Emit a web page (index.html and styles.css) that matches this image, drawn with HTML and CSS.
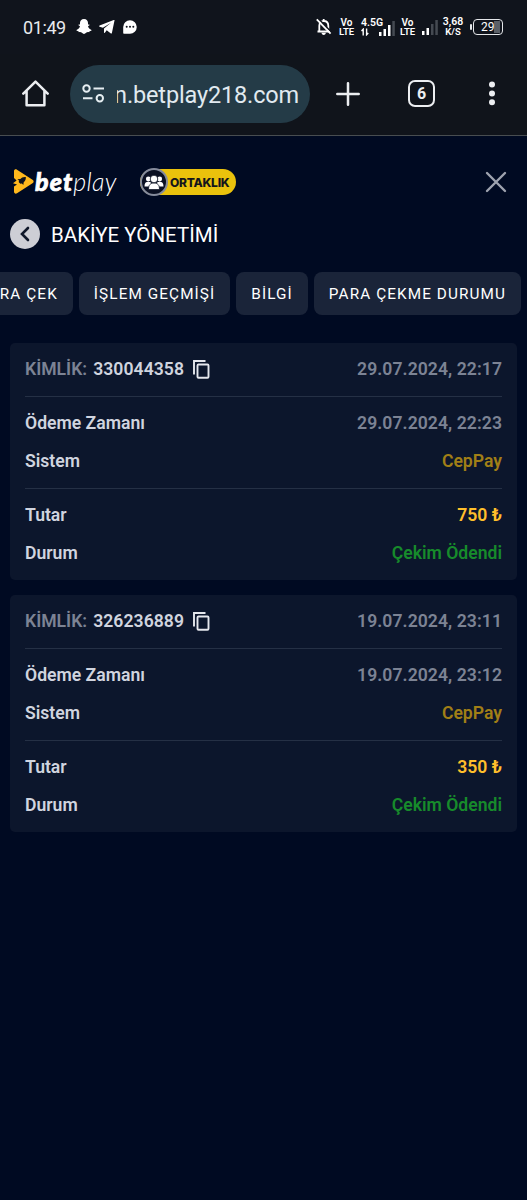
FILE: index.html
```html
<!DOCTYPE html>
<html lang="tr">
<head>
  <meta charset="UTF-8" />
  <meta name="viewport" content="width=device-width, initial-scale=1.0"/>
  <title>Bakiye Yönetimi</title>
  <link rel="stylesheet" href="styles.css">
</head>
<body>
  <div class="status-bar">
    <span class="clock">01:49</span>
    <svg class="snap" width="16" height="15" viewBox="0 0 16 15"><path d="M8 0C5.400 0 4 1.800 4 4v1.600L2.600 5.400 2.500 6.300l1.500.9C3.500 9 2.300 10.200.5 10.900c-.3.700.7 1.100 1.900 1.300l.5 1c1.400-.2 2.200-.1 3 .6.700.7 1.300 1.100 2.100 1.100s1.400-.4 2.100-1.100c.8-.7 1.600-.8 3-.6l.5-1c1.200-.2 2.200-.6 1.900-1.300-1.800-.7-3-1.900-3.500-3.700l1.500-.9-.1-.9-1.400.2V4C12 1.800 10.600 0 8 0z"/></svg>
    <svg class="tg" width="16" height="14" viewBox="0 0 16 14"><path d="M15.500.4 12.900 13c-.1.500-.5.600-1 .4L7.700 10.300 5.900 12.700c-.5.500-.9.200-.9-.4V8.600l7-5.900L3.900 7.800.6 6.700C0 6.500 0 5.900.6 5.600L14.700 0c.5-.2.900 0 .8.400z"/></svg>
    <svg class="chat" width="14" height="14" viewBox="0 0 14 14"><path d="M7 .2a6.700 6.700 0 1 1 0 13.500H1.200c-.6 0-1-.4-1-1V7A6.800 6.800 0 0 1 7 .2z"/><g fill="#10141c"><circle cx="3.700" cy="6.800" r="1"/><circle cx="7" cy="6.800" r="1"/><circle cx="10.300" cy="6.800" r="1"/></g></svg>

    <div class="status-right">
      <svg class="bell" width="16" height="18" viewBox="0 0 16 18"><path class="line" d="M3.300 13V7.700C3.300 4.800 5 3 7.700 3s4.600 1.800 4.600 4.700V13M1.500 13.500h12.600M7.700 3V1"/><path d="M5.600 14.800h4.200c0 1.300-.8 2.200-2.100 2.200s-2.100-.9-2.100-2.200z"/><path d="M2.200.5 16 14.800" stroke="#10141c" stroke-width="1.600"/><path class="line" d="M.8 1.400 14.600 15.700"/></svg>
      <div class="volte"><span>Vo</span><span>LTE</span></div>
      <div class="network">
        <span class="net-type">4.5G</span>
        <svg class="arrows" width="8" height="8" viewBox="0 0 8 8"><path class="line thin" d="M2.200 7.500V1.200L.5 2.900M5.600.5v6.300l1.700-1.700"/></svg>
        <svg class="signal" width="16" height="16" viewBox="0 0 16 16"><path d="M0 12h2.500v4H0zM4.500 9H7v7H4.500zM9 5h2.500v11H9z"/><path class="off" d="M13.300 1h2.500v15h-2.500z"/></svg>
      </div>
      <div class="volte second"><span>Vo</span><span>LTE</span></div>
      <svg class="signal-two" width="16" height="16" viewBox="0 0 16 16"><path d="M0 12h2.500v4H0zM4.500 9H7v7H4.500z"/><path class="off" d="M9 5h2.500v11H9zM13.300 1h2.500v15h-2.500z"/></svg>
      <div class="speed"><span>3,68</span><span>K/S</span></div>
      <div class="battery"><span>29</span></div>
    </div>
  </div>

  <div class="browser-bar">
    <svg class="home" width="27" height="27" viewBox="0 0 27 27"><path d="M1.300 13.600 13.500 1.600l12.200 12M4.600 11v14.200h17.800V11"/></svg>
    <div class="address">
      <svg width="23" height="19" viewBox="0 0 23 19"><circle cx="4.500" cy="4.500" r="3.200"/><path d="M11.500 4.500H22M1 14.200h9.500"/><circle cx="17.800" cy="14.200" r="3.200"/></svg>
      <div class="url"><span>n.betplay218.com</span></div>
    </div>
    <svg class="plus" width="24" height="24" viewBox="0 0 24 24"><path d="M12 1.300v21.400M1.300 12h21.400"/></svg>
    <div class="tab-count">6</div>
    <svg class="dots" width="6" height="25" viewBox="0 0 6 25"><circle cx="3" cy="3.500" r="3"/><circle cx="3" cy="12.500" r="3"/><circle cx="3" cy="21.300" r="3"/></svg>
  </div>

  <div class="site-header">
    <div class="logo">
      <svg width="21" height="25" viewBox="0 0 21 25"><path d="M1 2.200C1 .5 2.700-.1 4 .7l15.500 10c1.500 1 1.500 2.600 0 3.500L4 24.300c-1.400.8-3 .1-3-1.500v-5.300l3-2-4-1.200 3.600-2.700L1 9z" fill="#ffb81c"/><path d="M12.800 8c-2.900-.2-4.300.7-5.400 2l-3 .2 1.800 1.600-.6 1.300 1.800 1.700 1.500-.4 1.400 1.600.5-2.900c1.400-1.200 2.200-2.600 2-5.100z" fill="#10131e"/></svg>
      <span class="logo-bet">bet</span><span class="logo-play">play</span>
    </div>
    <div class="partner">
      <span class="partner-icon">
        <svg width="20" height="16" viewBox="0 0 20 16"><circle cx="4.300" cy="5" r="2.400"/><circle cx="15.700" cy="5" r="2.400"/><path d="M.5 12.500c0-3.300 1.200-4.700 3.800-4.700S8 9.200 8 12.500zM12 12.500c0-3.300 1.200-4.700 3.700-4.700s3.800 1.400 3.800 4.700z"/><g stroke="#0a1022" stroke-width=".8"><path d="M4.500 15.600c0-4.600 1.800-6.600 5.500-6.600s5.500 2 5.500 6.600z"/><circle cx="10" cy="5" r="3.800"/></g></svg>
      </span>
      <span class="partner-text">ORTAKLIK</span>
    </div>
    <svg class="close" width="22" height="22" viewBox="0 0 22 22"><path d="m2 2 18 18M20 2 2 20"/></svg>
  </div>

  <div class="page-title">
    <span class="back"><svg width="10" height="16" viewBox="0 0 10 16"><path d="M8 2 2 8l6 6"/></svg></span>
    <h1>BAKİYE YÖNETİMİ</h1>
  </div>

  <div class="tabs">
    <span class="tab">PARA ÇEK</span>
    <span class="tab">İŞLEM GEÇMİŞİ</span>
    <span class="tab">BİLGİ</span>
    <span class="tab">PARA ÇEKME DURUMU</span>
  </div>

  <div class="cards">
    <div class="card">
      <div class="group">
        <div class="row">
          <span class="muted">KİMLİK:</span><span class="id">330044358</span>
          <svg class="copy" width="17" height="19" viewBox="0 0 17 19"><path d="M1 14.500V1h11.500"/><rect x="4.500" y="4.500" width="11" height="13.300" rx="1"/></svg>
          <span class="value muted">29.07.2024, 22:17</span>
        </div>
      </div>
      <div class="group">
        <div class="row"><span>Ödeme Zamanı</span><span class="value muted">29.07.2024, 22:23</span></div>
        <div class="row"><span>Sistem</span><span class="value system">CepPay</span></div>
      </div>
      <div class="group">
        <div class="row"><span>Tutar</span><span class="value amount">750 ₺</span></div>
        <div class="row"><span>Durum</span><span class="value paid">Çekim Ödendi</span></div>
      </div>
    </div>

    <div class="card">
      <div class="group">
        <div class="row">
          <span class="muted">KİMLİK:</span><span class="id">326236889</span>
          <svg class="copy" width="17" height="19" viewBox="0 0 17 19"><path d="M1 14.500V1h11.500"/><rect x="4.500" y="4.500" width="11" height="13.300" rx="1"/></svg>
          <span class="value muted">19.07.2024, 23:11</span>
        </div>
      </div>
      <div class="group">
        <div class="row"><span>Ödeme Zamanı</span><span class="value muted">19.07.2024, 23:12</span></div>
        <div class="row"><span>Sistem</span><span class="value system">CepPay</span></div>
      </div>
      <div class="group">
        <div class="row"><span>Tutar</span><span class="value amount">350 ₺</span></div>
        <div class="row"><span>Durum</span><span class="value paid">Çekim Ödendi</span></div>
      </div>
    </div>
  </div>
</body>
</html>
```
FILE: styles.css
```css
* {
  box-sizing: border-box;
}
body {
  margin: 0;
  min-height: 1200px;
  background: #000a22;
  color: #fff;
  font-family: Roboto, "Noto Sans", sans-serif;
  overflow: hidden;
}
svg {
  display: block;
  flex: none;
}

/* phone status bar */
.status-bar {
  display: flex;
  align-items: center;
  height: 54px;
  padding: 0 24px 0 23px;
  background: #10141c;
  fill: #fff;
}
.clock {
  width: 53px;
  font-size: 18px;
  letter-spacing: -0.4px;
  color: #e8eaee;
}
.snap, .tg, .chat { margin-bottom: 1px; }
.tg { margin-left: 7px; }
.chat { margin-left: 8px; }
.status-right {
  display: flex;
  align-items: center;
  margin: 0 0 1px auto;
}
.line {
  fill: none;
  stroke: #fff;
  stroke-width: 1.8;
}
.thin { stroke-width: 1.4; }
.off { fill: #454a52; }
.volte, .speed {
  display: flex;
  flex-direction: column;
  align-items: center;
  width: 15px;
  margin-left: 7px;
  font-size: 9.5px;
  line-height: 9px;
  font-weight: 600;
}
.volte span:first-child { font-size: 10px; }
.network {
  display: grid;
  grid-template-columns: 18px 16px;
  width: 34px;
  height: 18px;
  margin-left: 7px;
}
.net-type {
  grid-area: 1 / 1;
  font-size: 10.5px;
  line-height: 9px;
  font-weight: 600;
  z-index: 1;
}
.arrows { grid-area: 1 / 1; align-self: end; }
.signal { grid-area: 1 / 2; align-self: end; }
.volte.second { margin-left: 5px; }
.signal-two { margin-left: 7px; }
.speed {
  width: 20px;
  margin-left: 5px;
  line-height: 9.5px;
}
.speed span:first-child { font-size: 10.5px; }
.battery {
  position: relative;
  width: 30px;
  height: 16px;
  margin-left: 10px;
  border: 1.5px solid #e5e7ea;
  border-radius: 4px;
  background: linear-gradient(#5b6067, #5b6067) 20px 1px / 6px 12px no-repeat;
  font-size: 12px;
  line-height: 14px;
  padding-left: 7px;
}
.battery::before {
  content: "";
  position: absolute;
  left: -4px;
  top: 4px;
  width: 2px;
  height: 6px;
  border-radius: 1px;
  background: #e5e7ea;
}

/* browser toolbar */
.browser-bar {
  display: flex;
  align-items: center;
  height: 82px;
  padding: 0 32px 2px 22px;
  border-bottom: 1px solid #484d50;
  background: #10141b;
}
.home, .plus {
  fill: none;
  stroke: #eceef1;
  stroke-width: 2.5;
  stroke-linejoin: round;
  stroke-linecap: round;
}
.address {
  display: flex;
  align-items: center;
  width: 240px;
  height: 58px;
  margin-left: 21px;
  padding: 0 11px 0 12px;
  border-radius: 29px;
  background: #243b47;
}
.address svg {
  fill: none;
  stroke: #e6eef2;
  stroke-width: 2;
}
.url {
  display: flex;
  justify-content: flex-end;
  width: 182px;
  margin: 2px 0 0 auto;
  overflow: hidden;
  font-size: 23.5px;
  letter-spacing: -0.15px;
  color: #e1eaf0;
}
.plus { margin-left: 26px; }
.tab-count {
  width: 27px;
  height: 27px;
  margin-left: 48px;
  border: 2.5px solid #eceef1;
  border-radius: 7px;
  color: #eceef1;
  font-size: 16px;
  font-weight: 700;
  line-height: 23px;
  text-align: center;
}
.dots {
  margin-left: auto;
  fill: #eceef1;
}

/* site header */
.site-header {
  display: flex;
  align-items: center;
  height: 44px;
  margin-top: 24px;
  padding: 0 20px 0 13px;
}
.logo {
  display: flex;
  align-items: center;
  width: 127px;
  font-family: Lato, sans-serif;
  font-style: italic;
  font-size: 25px;
  line-height: 25px;
}
.logo svg { margin-bottom: 2px; }
.logo span { margin-bottom: 2px; }
.logo .logo-bet {
  margin-left: 1px;
  font-weight: 900;
  letter-spacing: 1.1px;
  -webkit-text-stroke: 0.7px #fff;
}
.logo-play {
  font-weight: 300;
  letter-spacing: 0.3px;
}
.partner {
  display: flex;
  align-items: center;
  height: 26px;
  width: 96px;
  border-radius: 13px;
  background: #eac20c;
}
.partner-icon {
  display: flex;
  align-items: center;
  justify-content: center;
  flex: none;
  width: 28px;
  height: 28px;
  border: 2px solid #858b9b;
  border-radius: 50%;
  background: #0a1022;
  fill: #fff;
}
.partner-text {
  margin-left: 2px;
  color: #14151c;
  font-family: Inter, sans-serif;
  font-size: 12px;
  font-weight: 800;
  letter-spacing: -0.25px;
}
.close {
  margin-left: auto;
  fill: none;
  stroke: #9ea3af;
  stroke-width: 2.4;
  stroke-linecap: round;
}
.page-title {
  display: flex;
  align-items: center;
  height: 30px;
  margin: 15px 10px 0;
}
.back {
  display: flex;
  align-items: center;
  justify-content: center;
  width: 30px;
  height: 30px;
  border-radius: 50%;
  background: #cdced5;
}
.back svg {
  fill: none;
  stroke: #10182a;
  stroke-width: 2.6;
  stroke-linecap: round;
}
h1 {
  margin: 2px 0 0 11px;
  font-size: 20.5px;
  font-weight: 400;
}
.tabs {
  display: flex;
  justify-content: flex-end;
  gap: 6px;
  margin: 23px 6px 0 0;
}
.tab {
  flex: none;
  height: 43px;
  padding: 0 15px;
  border-radius: 8px;
  background: #1a2439;
  font-size: 15.3px;
  line-height: 44px;
  letter-spacing: 1.1px;
  white-space: nowrap;
}

/* withdrawals */
.cards {
  display: flex;
  flex-direction: column;
  gap: 15px;
  margin: 28px 10px 0;
}
.card {
  padding: 0 15px;
  border-radius: 5px;
  background: #0c162c;
}
.group {
  padding: 7px 0 8px;
  border-bottom: 1px solid #253045;
}
.group:last-child { border-bottom: none; }
.row {
  display: flex;
  align-items: center;
  height: 38px;
  font-size: 17.6px;
  font-weight: 600;
  color: #d0d4df;
}
.id {
  margin-left: 6px;
  letter-spacing: 0.05px;
}
.value { margin-left: auto; }
.muted { color: #7c8394; }
.value.muted { letter-spacing: 0.06px; }
.copy {
  margin-left: 9px;
  fill: none;
  stroke: #e5e7ed;
  stroke-width: 1.9;
}
.system { color: #a17f16; }
.amount { color: #ffbf2b; }
.paid { color: #178b2b; }
```
